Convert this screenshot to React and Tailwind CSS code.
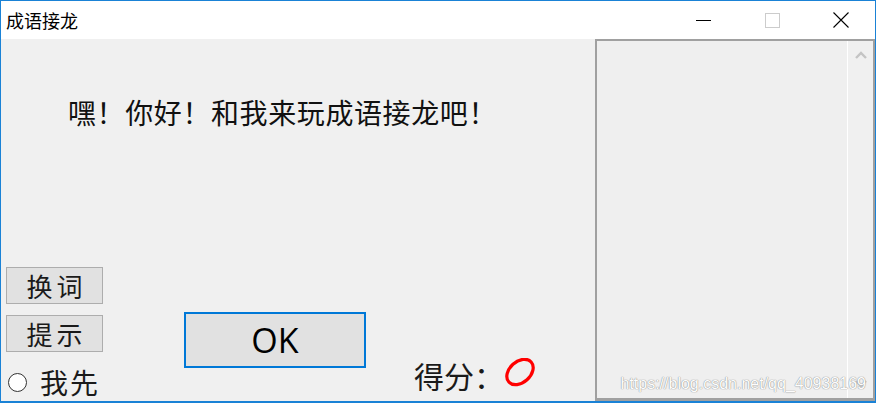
import React from "react";

const cjk = { fontFamily: '"Noto Sans CJK SC", "Noto Sans", sans-serif' };

function TitleBar() {
  return (
    <div className="flex h-[38px] shrink-0 items-center bg-white">
      <div className="flex-1 pl-[5px] text-[18px] leading-[18px] text-black" style={cjk}>
        成语接龙
      </div>
      <div className="flex h-full w-[69px] items-center justify-center">
        <div className="h-px w-[15px] bg-black" />
      </div>
      <div className="flex h-full w-[69px] items-center justify-center">
        <div className="h-[15px] w-[15px] border border-[#cccccc]" />
      </div>
      <div className="flex h-full w-[68px] items-center justify-center">
        <svg width="16" height="16" viewBox="0 0 16 16">
          <path d="M0.5 0.5 L15.5 15.5 M15.5 0.5 L0.5 15.5" stroke="#000" strokeWidth="1.1" fill="none" />
        </svg>
      </div>
    </div>
  );
}

function SmallButton({ children }) {
  return (
    <div
      className="flex h-[37px] w-[97px] items-center justify-center border border-[#adadad] bg-[#e1e1e1] pl-[4px] text-[26px] leading-[26px] tracking-[4px] text-[#1a1a1a]"
      style={cjk}
    >
      {children}
    </div>
  );
}

function LeftPane() {
  return (
    <div className="flex flex-1 flex-col">
      <div className="pl-[67px] pt-[59px] text-[28px] leading-[28px] tracking-[0.6px] text-[#111]" style={cjk}>
        嘿！你好！和我来玩成语接龙吧！
      </div>
      <div className="mt-auto flex items-end">
        <div className="flex flex-col pl-[5px] pb-[3px]">
          <SmallButton>换词</SmallButton>
          <div className="mt-[11px]">
            <SmallButton>提示</SmallButton>
          </div>
          <div className="mt-[14px] flex h-[32px] items-center">
            <div className="ml-[2px] h-[19px] w-[19px] rounded-full border-[1.5px] border-[#333] bg-white" />
            <div className="ml-[13px] text-[28px] leading-[28px] tracking-[2px] text-[#1a1a1a]" style={cjk}>
              我先
            </div>
          </div>
        </div>
        <div className="mb-[33px] ml-[81px] flex h-[56px] w-[182px] items-center justify-center border-2 border-[#0078d7] bg-[#e1e1e1]">
          <span className="text-[34px] leading-[34px] text-black" style={{ fontFamily: '"Open Sans", "Noto Sans", sans-serif' }}>
            OK
          </span>
        </div>
        <div className="mb-[11px] ml-[48px] text-[30px] leading-[30px] text-[#1a1a1a]" style={cjk}>
          得分：
        </div>
        <svg className="mb-[13px] -ml-[1px]" width="34" height="30" viewBox="0 0 34 30">
          <ellipse cx="17" cy="14" rx="15" ry="10.5" transform="rotate(-42 17 14)" fill="none" stroke="#ff0000" strokeWidth="3.2" />
        </svg>
      </div>
    </div>
  );
}

function ListBox() {
  return (
    <div className="flex w-[280px] border-2 border-b-[3px] border-[#a0a0a0] bg-[#efefef]">
      <div className="flex-1" />
      <div className="flex w-[26px] flex-col items-center justify-between border-l border-white bg-[#f0f0f0] py-[10px]">
        <svg width="12" height="8" viewBox="0 0 12 8">
          <path d="M1 7 L6 2 L11 7" stroke="#c4c4c4" strokeWidth="2.4" fill="none" />
        </svg>
        <svg width="12" height="8" viewBox="0 0 12 8">
          <path d="M1 1 L6 6 L11 1" stroke="#c4c4c4" strokeWidth="2.4" fill="none" />
        </svg>
      </div>
    </div>
  );
}

export default function App() {
  return (
    <div className="relative flex h-[403px] w-[876px] flex-col overflow-hidden border border-b-2 border-[#1a82d6] bg-[#f0f0f0]">
      <TitleBar />
      <div className="flex flex-1">
        <LeftPane />
        <ListBox />
      </div>
      <div
        className="absolute bottom-[9px] right-[9px] text-[16px] leading-[16px] text-[#fdfdfd] [text-shadow:0_0_1px_#8a8a8a,0_0_1px_#9a9a9a]"
        style={{ fontFamily: '"Liberation Sans", Arial, sans-serif' }}
      >
        https://blog.csdn.net/qq_40938169
      </div>
    </div>
  );
}
